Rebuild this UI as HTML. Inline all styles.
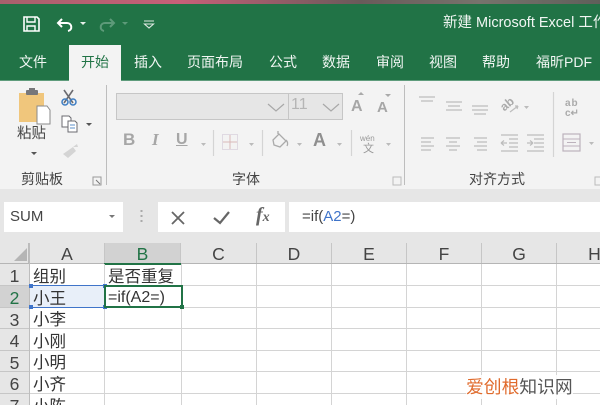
<!DOCTYPE html>
<html><head><meta charset="utf-8">
<style>
html,body{margin:0;padding:0;background:#fff}
#p{position:relative;width:600px;height:405px;overflow:hidden;background:#fff;font-family:"Liberation Sans","Noto Sans CJK SC",sans-serif;color:#333;filter:blur(.35px)}
#p div{position:absolute}
.t{color:#f1f6f3;font-size:14px;line-height:20px;top:52px;white-space:nowrap}
.g{font-size:14px;line-height:18px;color:#444;white-space:nowrap}
.h{background:#e6e6e6;top:243px;height:20px;font-size:17.5px;line-height:23px;text-align:center;color:#444;border-right:1px solid #c6c6c6;box-sizing:border-box}
.r{left:0;width:29px;background:#e6e6e6;font-size:17.5px;text-align:center;color:#444;line-height:24px;border-bottom:1px solid #c6c6c6;box-sizing:border-box}
.hl{left:30px;width:570px;height:1px;background:#d4d4d4}
.vl{top:264px;width:1px;height:141px;background:#d4d4d4}
.c{font-size:16.5px;line-height:20px;color:#333;white-space:nowrap;left:33px}
svg{position:absolute;overflow:visible}
</style></head><body><div id="p">
<div style="left:0;top:0;width:600px;height:4px;background:linear-gradient(90deg,#a8606c,#c85f78 30%,#6a5a5a 60%,#77736c 80%,#5f5f5a)"></div>
<div style="left:0;top:4px;width:600px;height:77px;background:#217346"></div>
<svg style="left:0;top:0" width="300" height="45" fill="none">
<path d="M24 17h13l2 2v12H24z" stroke="#fff" stroke-width="1.600"/><path d="M27 17v5h8v-5M27 31v-5h8v5" stroke="#fff" stroke-width="1.400"/>
<path d="M62 19l-4 4 4 4" stroke="#fff" stroke-width="2"/><path d="M58 23h9c5 0 6 7 1 8" stroke="#fff" stroke-width="2"/>
<path d="M80 22h6l-3 3z" fill="#e8f0ea"/>
<path d="M110 19l4 4-4 4" stroke="#5d9a79" stroke-width="2"/><path d="M114 23h-9c-5 0-6 7-1 8" stroke="#5d9a79" stroke-width="2"/>
<path d="M122 22h6l-3 3z" fill="#5d9a79"/>
<path d="M144 21h10M144.500 24h9l-4.500 4z" stroke="#dfe9e3" stroke-width="1.100"/>
</svg>
<div style="left:443px;top:13px;font-size:14.500px;line-height:20px;color:#f1f6f3;white-space:nowrap;width:157px;overflow:hidden">新建 Microsoft Excel 工作簿</div>
<div class="t" style="left:19px">文件</div>
<div style="left:69px;top:45px;width:52px;height:37px;background:#f3f3f3"></div>
<div class="t" style="left:81px;color:#217346">开始</div>
<div class="t" style="left:134px">插入</div>
<div class="t" style="left:187px">页面布局</div>
<div class="t" style="left:269px">公式</div>
<div class="t" style="left:322px">数据</div>
<div class="t" style="left:376px">审阅</div>
<div class="t" style="left:429px">视图</div>
<div class="t" style="left:482px">帮助</div>
<div class="t" style="left:536px">福昕PDF</div>
<div style="left:0;top:81px;width:600px;height:108px;background:#f3f3f3"></div>
<div style="left:0;top:80px;width:69px;height:1px;background:#5f9c7c"></div>
<div style="left:121px;top:80px;width:479px;height:1px;background:#5f9c7c"></div>
<div style="left:0;top:189px;width:600px;height:54px;background:#e6e6e6"></div>

<svg style="left:0;top:80px" width="600" height="110" fill="none">
<rect x="19" y="13" width="25" height="29" fill="#f0c67c"/><rect x="26" y="10" width="12" height="5" rx="1" fill="#77777a"/><rect x="29" y="8" width="6" height="4" fill="#77777a"/>
<path d="M37 26h10l3 4v14H37z" fill="#fff" stroke="#8a8a8a"/>
<path d="M64 10l9 13M73 10l-9 13" stroke="#6b6b70" stroke-width="1.600"/><circle cx="65" cy="22" r="3" stroke="#3e7dc2" stroke-width="1.500"/><circle cx="73" cy="22" r="3" stroke="#3e7dc2" stroke-width="1.500"/>
<path d="M62 36h7l2 2v9H62z" fill="#fff" stroke="#6b6b70"/><path d="M68 41h7l2 2v9H68z" fill="#fff" stroke="#6b6b70"/><path d="M70 45h5M70 48h5" stroke="#5b8fc8"/>
<path d="M86 43h6l-3 3zM31 72h6l-3 3z" fill="#555"/>
<path d="M63 74l10-7 3 4-8 7zM73 67l4-3 1 3z" fill="#d4d4d4"/>
<path d="M93 97h8v8h-8z" stroke="#999"/><path d="M96 100l4 4" stroke="#777"/>
<rect x="393" y="97" width="8" height="8" stroke="#bbb"/><rect x="595" y="97" width="8" height="8" stroke="#bbb"/>
<path d="M106.500 5v100" stroke="#bdbdbd"/><path d="M404.500 5v100" stroke="#bdbdbd"/>
<rect x="116.500" y="13.500" width="172" height="26" fill="#e6e6e6" stroke="#c6c6c6"/>
<rect x="288.500" y="13.500" width="54" height="26" fill="#e6e6e6" stroke="#c6c6c6"/>
<path d="M268 24l8 7 8-7M323 24l8 7 8-7" stroke="#a8a8a8" stroke-width="1.200"/>
<path d="M358 15l3-3 3 3z" fill="#aaa"/><path d="M385 14l3 3 3-3z" fill="#aaa"/>
<path d="M213.500 50v26M262.500 50v26M351.500 50v26" stroke="#d4d4d4" stroke-width="1.200"/>
<path d="M201 63h5l-2.500 3zM249 63h5l-2.500 3zM297 63h5l-2.500 3zM337 63h5l-2.500 3zM386 63h5l-2.500 3z" fill="#bbb"/>
<rect x="222.500" y="54.500" width="15" height="15" stroke="#cbbfd0" stroke-dasharray="1 1"/><path d="M230 55v14M223 62h14" stroke="#d9b8b8"/>
<path d="M274 65l-1-5 6-6 7 7-6 6zM278 54v-3M286 60c2 2 2 4 1 6" stroke="#aaa" stroke-width="1.300"/>
<path d="M419 17h16M421 21h12M446 22h16M448 26h12M446 30h16M472 26h16M472 30h16M474 34h12" stroke="#bdbdbd" stroke-width="1.200"/>
<path d="M421 58h13M421 62h10M421 66h13M421 70h10M446 58h14M449 62h8M446 66h14M449 70h8M474 58h13M477 62h10M474 66h13M477 70h10" stroke="#bdbdbd" stroke-width="1.200"/>
<path d="M501 55h17M509 59h9M509 63h9M509 67h9M501 71h17M501 63h6M501 63l3-2.500M501 63l3 2.500" stroke="#bdbdbd" stroke-width="1.200"/>
<path d="M527 55h17M534 59h10M534 63h10M534 67h10M527 71h17M527 63h6M533 63l-3-2.500M533 63l-3 2.500" stroke="#bdbdbd" stroke-width="1.200"/>
<path d="M510 32l8-6M518 26l-3 0M518 26l-1 3" stroke="#bdbdbd" stroke-width="1.200"/>
<path d="M524 26h5l-2.500 3zM589 62h5l-2.500 3z" fill="#bbb"/>
<path d="M553.500 12v65" stroke="#d4d4d4" stroke-width="1.200"/>
<rect x="563" y="54" width="17" height="17" stroke="#bcb2bc" stroke-width="1.200"/><path d="M563 59h17M563 66h17M567 62.500h9" stroke="#bcb2bc"/>
</svg>
<div style="left:500px;top:97px;font-size:12px;color:#aaa;line-height:14px;transform:rotate(-40deg);font-weight:bold">ab</div>
<div style="left:123px;top:131px;font-size:17px;font-weight:bold;color:#a6a6a6;line-height:18px">B</div>
<div style="left:152px;top:131px;font-size:17px;font-weight:bold;font-style:italic;color:#a6a6a6;line-height:18px;font-family:'Liberation Serif',serif">I</div>
<div style="left:176px;top:131px;font-size:16px;font-weight:bold;color:#a6a6a6;line-height:18px;text-decoration:underline">U</div>
<div style="left:291px;top:96px;font-size:16px;color:#b5b5b5;line-height:18px">11</div>
<div style="left:351px;top:98px;font-size:16px;font-weight:bold;color:#a6a6a6;line-height:18px">A</div>
<div style="left:377px;top:99px;font-size:15px;font-weight:bold;color:#a6a6a6;line-height:18px">A</div>
<div style="left:313px;top:130px;font-size:18px;font-weight:bold;color:#8f8f8f;line-height:20px">A</div>
<div style="left:360px;top:134px;font-size:8px;color:#999;line-height:9px">wén</div>
<div style="left:363px;top:143px;font-size:11px;color:#999;line-height:12px">文</div>
<div style="left:565px;top:99px;font-size:10px;font-weight:bold;color:#aaa;line-height:10px;letter-spacing:1px">ab</div>
<div style="left:565px;top:109px;font-size:10px;font-weight:bold;color:#aaa;line-height:10px">c↵</div>
<div class="g" style="left:17px;top:125px;font-size:14.500px">粘贴</div>
<div class="g" style="left:21px;top:170px">剪贴板</div>
<div class="g" style="left:232px;top:170px">字体</div>
<div class="g" style="left:469px;top:170px">对齐方式</div>

<div style="left:4px;top:202px;width:119px;height:30px;background:#fff"></div>
<div style="left:10px;top:208px;font-size:15px;line-height:18px;color:#444">SUM</div>
<svg style="left:0;top:195px" width="300" height="40" fill="none">
<path d="M109 20h6l-3 3z" fill="#777"/>
<path d="M140.500 15h2v2h-2zM140.500 20h2v2h-2zM140.500 25h2v2h-2z" fill="#aaa"/>
</svg>
<div style="left:158px;top:202px;width:127px;height:30px;background:#fff"></div>
<svg style="left:0;top:195px" width="300" height="40" fill="none">
<path d="M172 17l12 12M184 17l-12 12" stroke="#666" stroke-width="1.800"/>
<path d="M214 23l6 5 9-11" stroke="#666" stroke-width="2.200"/>
</svg>
<div style="left:256px;top:205px;font-size:20px;font-style:italic;font-weight:bold;font-family:'Liberation Serif',serif;color:#666;line-height:20px">f<span style="font-size:14px">x</span></div>
<div style="left:289px;top:202px;width:311px;height:30px;background:#fff"></div>
<div style="left:302px;top:208px;font-size:15px;line-height:18px;color:#444;white-space:nowrap">=if(<span style="color:#3f74c9">A2</span>=)</div>

<div style="left:0;top:243px;width:29px;height:20px;background:#e6e6e6;border-right:1px solid #bbb;box-sizing:border-box"></div>
<svg style="left:12px;top:247px" width="16" height="16"><path d="M15 1v13H2z" fill="#b5b5b5"/></svg>
<div class="h" style="left:30px;width:75px">A</div>
<div class="h" style="left:105px;width:76px;background:#d2d2d2;color:#217346;border-right:1px solid #c6c6c6">B</div>
<div class="h" style="left:181px;width:76px">C</div>
<div class="h" style="left:257px;width:75px">D</div>
<div class="h" style="left:332px;width:75px">E</div>
<div class="h" style="left:407px;width:75px">F</div>
<div class="h" style="left:482px;width:75px">G</div>
<div class="h" style="left:557px;width:75px;border:0">H</div>
<div style="left:0;top:263px;width:600px;height:1px;background:#b5b5b5"></div>
<div style="left:104px;top:263px;width:77px;height:2px;background:#217346"></div>

<div class="r" style="top:264px;height:22px">1</div>
<div class="r" style="top:286px;height:22px;background:#d2d2d2;color:#217346">2</div>
<div class="r" style="top:308px;height:21px">3</div>
<div class="r" style="top:329px;height:22px">4</div>
<div class="r" style="top:351px;height:21px">5</div>
<div class="r" style="top:372px;height:22px">6</div>
<div class="r" style="top:394px;height:11px;border:0">7</div>
<div style="left:29px;top:243px;width:1px;height:162px;background:#bdbdbd"></div>

<div class="hl" style="top:285px"></div><div class="hl" style="top:307px"></div><div class="hl" style="top:328px"></div><div class="hl" style="top:350px"></div><div class="hl" style="top:371px"></div><div class="hl" style="top:393px"></div>
<div class="vl" style="left:104px"></div><div class="vl" style="left:181px"></div><div class="vl" style="left:256px"></div><div class="vl" style="left:331px"></div><div class="vl" style="left:406px"></div><div class="vl" style="left:481px"></div><div class="vl" style="left:556px"></div>

<div style="left:30px;top:285px;width:75px;height:23px;background:#e8eff9;border:1.500px solid #3f74c9;border-width:1.500px 0;box-sizing:border-box"></div>
<div style="left:29px;top:284px;width:4px;height:4px;background:#3f74c9"></div>
<div style="left:103px;top:284px;width:4px;height:4px;background:#3f74c9"></div>
<div style="left:29px;top:305px;width:4px;height:4px;background:#3f74c9"></div>
<div style="left:103px;top:305px;width:4px;height:4px;background:#3f74c9"></div>
<div style="left:104px;top:285px;width:79px;height:23px;border:2px solid #217346;box-sizing:border-box;background:#fff"></div>
<div style="left:180px;top:305px;width:4px;height:4px;background:#217346"></div>

<div class="c" style="top:267px">组别</div>
<div class="c" style="top:267px;left:108px">是否重复</div>
<div class="c" style="top:289px">小王</div>
<div class="c" style="top:288px;left:108px;font-size:16px">=if(A2=)</div>
<div class="c" style="top:310px">小李</div>
<div class="c" style="top:332px">小刚</div>
<div class="c" style="top:353px">小明</div>
<div class="c" style="top:375px">小齐</div>
<div class="c" style="top:397px">小陈</div>

<div style="left:466px;top:375px;font-size:17.800px;line-height:24px;white-space:nowrap;color:#e06a2b;background:rgba(255,255,255,.85)">爱创根<span style="color:#555">知识网</span></div>
</div></body></html>
